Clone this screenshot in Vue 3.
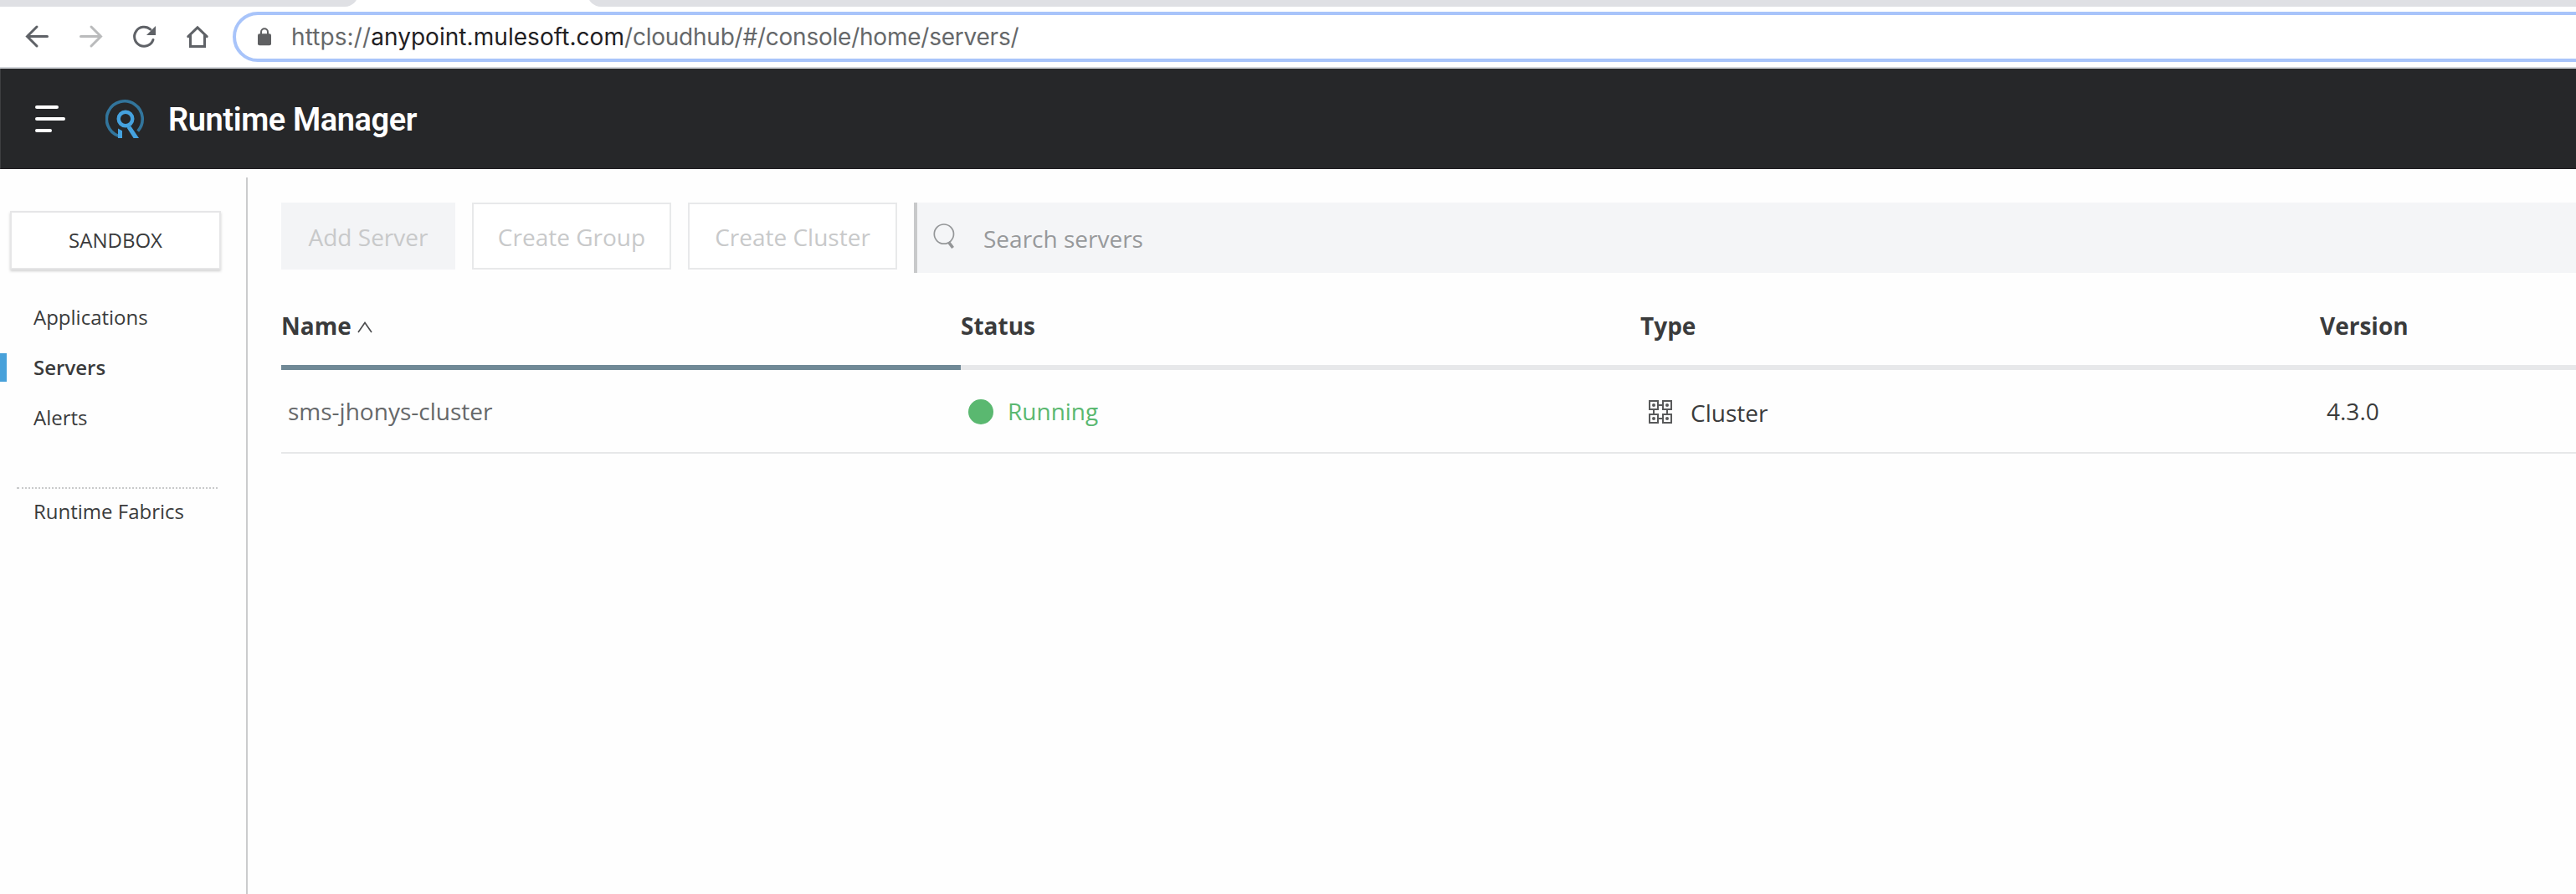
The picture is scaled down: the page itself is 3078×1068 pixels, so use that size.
<script setup>
const navItems = ['Applications', 'Servers', 'Alerts']
const activeNav = 'Servers'
const columns = ['Name', 'Status', 'Type', 'Version']
const servers = [
  { name: 'sms-jhonys-cluster', status: 'Running', type: 'Cluster', version: '4.3.0' }
]
</script>

<template>
  <div class="window">
    <div class="tabstrip">
      <div class="tab-left"></div>
      <div class="tab-right"></div>
    </div>
    <div class="toolbar">
      <svg class="tool" viewBox="0 0 64 72"><path d="M44.5 35.5H20.5M32 24L20.5 35.5L32 47" /></svg>
      <svg class="tool muted" viewBox="0 0 64 72"><path d="M20.5 35.5H44.5M33 24L44.5 35.5L33 47" /></svg>
      <svg class="tool" viewBox="0 0 64 72">
        <path d="M39.8 27.2A11.5 11.5 0 1 0 43 39.5" />
        <path class="solid" d="M46 23V34H35Z" />
      </svg>
      <svg class="tool" viewBox="0 0 64 72">
        <path d="M20.8 35.6L32 24.8L43.2 35.6" />
        <path class="square" d="M23.5 34V47.5H40.5V34" />
      </svg>
      <div class="omnibox">
        <svg class="lock" viewBox="0 0 16 22">
          <path d="M4 8V5.2a4 4 0 0 1 8 0V8" fill="none" stroke="#5f6062" stroke-width="2" />
          <rect y="7.3" width="16" height="14" rx="2" fill="#5f6062" />
        </svg>
        <div class="url"><span>https://</span><b>anypoint.mulesoft.com</b>/cloudhub/#/console/home/servers/</div>
      </div>
    </div>

    <header class="appbar">
      <div class="burger"><i></i><i></i><i></i></div>
      <svg class="logo" viewBox="0 0 48 48">
        <path d="M15.6 44.4A21.4 21.4 0 1 1 38.7 38.6" fill="none" stroke="#32759c" stroke-width="3.6" />
        <circle cx="24" cy="24" r="8.3" fill="none" stroke="#45a2df" stroke-width="4.4" />
        <path d="M15 35.5L20 38.3V47H15ZM25.5 34.5L30.2 32.5L40 47H33.6Z" fill="#45a2df" />
      </svg>
      <h1>Runtime Manager</h1>
    </header>

    <div class="body">
      <aside>
        <button class="env">SANDBOX</button>
        <nav>
          <a v-for="item in navItems" :key="item" :class="{ active: item === activeNav }"><span>{{ item }}</span></a>
        </nav>
        <svg class="dots" viewBox="0 0 240 2"><path d="M0 1H4M6 1H240" stroke="#c9cacb" stroke-width="2" stroke-dasharray="2 2" /><path d="M0 1H3" stroke="#c9cacb" stroke-width="2" /></svg>
        <a class="fabrics"><span>Runtime Fabrics</span></a>
      </aside>

      <main>
        <div class="actions">
          <button class="btn add">Add Server</button>
          <button class="btn group">Create Group</button>
          <button class="btn cluster">Create Cluster</button>
          <div class="search">
            <svg viewBox="0 0 28 34">
              <ellipse cx="12.9" cy="13.6" rx="11.6" ry="11.6" fill="none" stroke="#949698" stroke-width="1.7" />
              <path d="M18.4 23.2L23.6 30" stroke="#949698" stroke-width="3.6" />
            </svg>
            <span>Search servers</span>
          </div>
        </div>

        <div class="row head">
          <div v-for="(c, i) in columns" :key="c" class="cell" :class="{ sorted: i === 0 }">
            <span>{{ c }}</span>
            <svg v-if="i === 0" class="caret" viewBox="0 0 18 14"><path d="M1 13L9 1.5L17 13" fill="none" stroke="#4a4b4d" stroke-width="1.6" /></svg>
          </div>
        </div>
        <div v-for="s in servers" :key="s.name" class="row data">
          <div class="cell name">{{ s.name }}</div>
          <div class="cell status"><i class="dot"></i>{{ s.status }}</div>
          <div class="cell type">
            <svg viewBox="0 0 28 28" fill="none" stroke="#58595a" stroke-width="2">
              <path d="M1 1H11V11H1ZM17 1H27V11H17ZM1 17H11V27H1ZM17 17H27V27H17ZM12 6H16M12 22H16M6 12V16M22 12V16" />
              <g fill="#58595a" stroke="none"><circle cx="6" cy="6" r="2" /><circle cx="22" cy="6" r="2" /><circle cx="6" cy="22" r="2" /><circle cx="22" cy="22" r="2" /></g>
            </svg>
            <span>{{ s.type }}</span>
          </div>
          <div class="cell version">{{ s.version }}</div>
        </div>
      </main>
    </div>
  </div>
</template>

<style>
body { margin: 0; background: #fefefe; }
</style>

<style scoped>
.window { width: 3078px; height: 1068px; overflow: hidden; display: flex; flex-direction: column; font-family: "Open Sans", sans-serif; color: #3a3b3c; background: #fefefe; }
.window * { box-sizing: border-box; }
.tabstrip { height: 8px; flex: none; overflow: hidden; display: flex; align-items: flex-end; justify-content: space-between; background: #fff; }
.tab-left, .tab-right { height: 32px; background: #dfe0e4; }
.tab-left { width: 428px; border-bottom-right-radius: 16px; }
.tab-right { width: 2376px; border-bottom-left-radius: 16px; }
.toolbar { height: 74px; flex: none; display: flex; padding-left: 12px; background: #fff; border-bottom: 2px solid #d4d7db; }
.tool { width: 64px; height: 72px; flex: none; fill: none; stroke: #5f6267; stroke-width: 3; stroke-linecap: round; }
.tool .square { stroke-linejoin: miter; }
.tool .solid { fill: #5f6267; stroke: none; }
.muted { stroke: #babbbc; }
.omnibox { margin: 6px -40px 0 10px; height: 60px; flex: 1; display: flex; align-items: center; border: 4px solid #a8c4fa; border-radius: 30px; padding-left: 26px; }
.lock { width: 16px; height: 22px; margin-right: 24px; }
.url { font-family: Inter, sans-serif; font-size: 28px; line-height: 52px; letter-spacing: -0.23px; white-space: nowrap; color: #66686a; }
.url span { letter-spacing: 0.1px; }
.url b { font-weight: 400; letter-spacing: 0.05px; color: #1f2023; }
.appbar { height: 120px; flex: none; display: flex; align-items: center; background: #262729; border-left: 1px solid #3d3e40; border-bottom: 1px solid #1e1c20; padding-left: 41px; }
.burger { width: 36px; display: flex; flex-direction: column; gap: 10px; }
.burger i { height: 4px; border-radius: 2px; background: #fff; }
.burger i:first-child { width: 28px; }
.burger i:last-child { width: 20px; }
.logo { width: 48px; height: 48px; margin: 1px 0 0 48px; }
h1 { margin: 2px 0 0 27px; font: 600 38px/60px Roboto, sans-serif; letter-spacing: -0.4px; color: #fff; white-space: nowrap; }
.body { flex: 1; display: flex; padding-top: 10px; }
aside { width: 296px; flex: none; border-right: 2px solid #cbcccd; padding-top: 40px; display: flex; flex-direction: column; font-size: 24px; }
button { font-family: inherit; color: inherit; padding: 0; }
.env { width: 252px; height: 70px; margin: 0 0 27px 12px; font-size: 24px; background: #fff; border: 2px solid #e6e6e7; box-shadow: 0 2px 3px rgba(0,0,0,.18); padding-bottom: 1px; }
nav a, .fabrics { display: flex; align-items: center; height: 60px; }
nav span, .fabrics span { height: 34px; line-height: 34px; padding-left: 32px; border-left: 8px solid transparent; }
nav .active span { border-color: #48a1da; font-weight: 600; }
.dots { width: 240px; height: 2px; margin: 53px 0 -3px 20px; }
main { flex: 1; padding: 30px 0 0 40px; min-width: 0; }
.actions { display: flex; height: 84px; align-items: flex-start; }
.btn { height: 80px; font-size: 28px; margin-right: 20px; color: #c8c9ca; background: #fff; border: 2px solid #e8e9ea; padding-top: 2px; }
.add { width: 208px; background: #f3f4f6; border-color: #f3f4f6; }
.group { width: 238px; }
.cluster { width: 250px; }
.search { flex: 1; height: 84px; display: flex; align-items: center; background: #f4f5f7; border-left: 4px solid #c8c9ca; font-size: 28px; color: #97999b; }
.search svg { width: 28px; height: 34px; margin: -2px 32px 0 19px; }
.search span { padding-top: 2px; }
.row { display: flex; width: 3248px; font-size: 28px; }
.cell { width: 812px; display: flex; align-items: center; }
.head { margin-top: 30px; }
.head .cell { height: 86px; padding-bottom: 14px; border-bottom: 6px solid #e7e8ea; font-weight: 700; }
.head .sorted { border-color: #708996; }
.caret { width: 18px; height: 14px; margin: 3px 0 0 7px; }
.data .cell { height: 100px; padding: 0 0 0 8px; border-bottom: 2px solid #e7e8e9; }
.name { color: #66686a; }
.status { color: #5ab870; }
.dot { width: 30px; height: 30px; border-radius: 50%; background: #5ab870; margin: 1px 17px 0 1px; }
.type svg { width: 28px; height: 28px; margin: 2px 22px 0 2px; }
.type span { padding-top: 4px; }
</style>
